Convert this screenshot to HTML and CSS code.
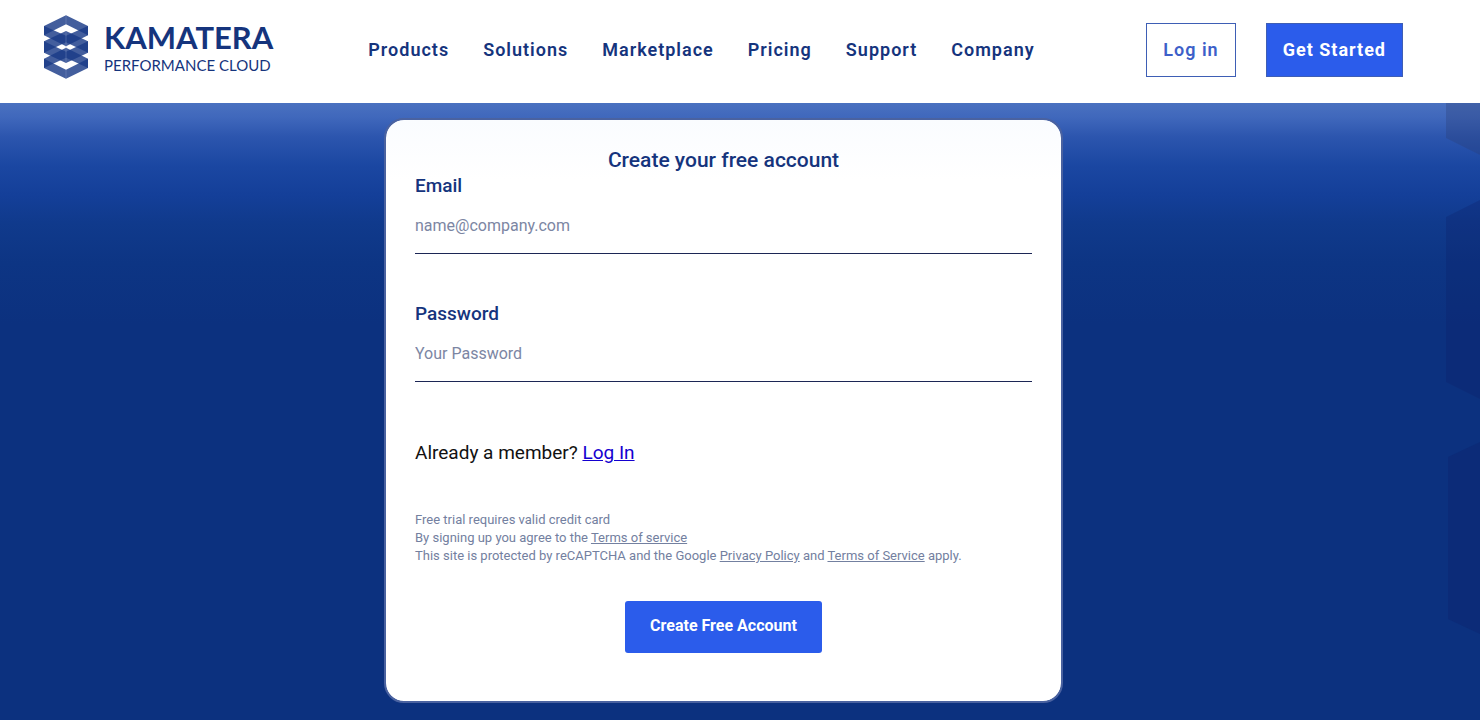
FILE: index.html
```html
<!DOCTYPE html>
<html lang="en">
<head>
    <meta charset="UTF-8">
    <meta name="viewport" content="width=device-width, initial-scale=1.0">
    <title>Kamatera - Create your free account</title>
    <link rel="stylesheet" href="styles.css">
</head>
<body>
    <header class="header">
        <a class="logo" href="#">
            <svg class="logo-mark" viewBox="24 25 130 188" aria-hidden="true">
                <!-- three stacked rings, each one an upper and a lower chevron -->
                <g class="ring">
                    <path d="M24 57 89 25 154 57V84L89 52 24 84Z"/>
                    <path d="M24 57 89 86 154 57V84L89 117 24 84Z"/>
                </g>
                <g class="ring">
                    <path d="M24 102 89 72 154 102V136L89 105 24 136Z"/>
                    <path d="M24 102 89 133 154 102V136L89 166 24 136Z"/>
                </g>
                <g class="ring">
                    <path d="M24 154 89 121 154 154V181L89 151 24 181Z"/>
                    <path d="M24 154 89 186 154 154V181L89 213 24 181Z"/>
                </g>
                <path class="seam" d="M89 25V51M89 74V164M89 187V213"/>
            </svg>
            <span class="logo-text">
                <span class="logo-name">KAMATERA</span>
                <span class="logo-tagline">PERFORMANCE CLOUD</span>
            </span>
        </a>

        <nav class="nav">
            <a href="#">Products</a>
            <a href="#">Solutions</a>
            <a href="#">Marketplace</a>
            <a href="#">Pricing</a>
            <a href="#">Support</a>
            <a href="#">Company</a>
        </nav>

        <div class="header-buttons">
            <a class="btn-login" href="#">Log in</a>
            <a class="btn-start" href="#">Get Started</a>
        </div>
    </header>

    <main class="hero">
        <!-- Hexagons along the right edge -->
        <svg class="hexagons" viewBox="0 0 34 540" aria-hidden="true">
            <path class="faded" d="M0 0H34V52L0 35Z"/>
            <path d="M0 114 34 97V296L0 279Z"/>
            <path d="M2 354 34 339V531L2 516Z"/>
        </svg>

        <form class="card">
            <h1 class="card-title">Create your free account</h1>

            <div class="field">
                <label for="email">Email</label>
                <input type="email" id="email" placeholder="name@company.com">
            </div>

            <div class="field">
                <label for="password">Password</label>
                <input type="password" id="password" placeholder="Your Password">
            </div>

            <p class="member">Already a member? <a href="#">Log In</a></p>

            <p class="terms">
                Free trial requires valid credit card<br>
                By signing up you agree to the <a href="#">Terms of service</a><br>
                This site is protected by reCAPTCHA and the Google <a href="#">Privacy Policy</a> and <a href="#">Terms of Service</a> apply.
            </p>

            <button class="btn-create" type="submit">Create Free Account</button>
        </form>
    </main>
</body>
</html>
```
FILE: styles.css
```css
* {
    box-sizing: border-box;
}

body {
    margin: 0;
    min-height: 100vh;
    display: flex;
    flex-direction: column;
    font-family: Roboto, Arial, sans-serif;
    background-color: #fff;
}

/* Header */
.header {
    display: flex;
    align-items: center;
    padding: 15px 77px 18px 44px;
    min-height: 103px;
}

.logo {
    display: flex;
    align-items: center;
    align-self: flex-start;
    gap: 16px;
    color: #15347d;
    text-decoration: none;
}

.logo-mark {
    width: 44px;
    height: 64px;
}

.ring path {
    fill: #1a3a88;
    fill-opacity: 0.82;
}

.seam {
    stroke: #8fa2d0;
    stroke-width: 1;
    fill: none;
}

.logo-text {
    display: flex;
    flex-direction: column;
    font-family: Lato, sans-serif;
}

.logo-name {
    font-size: 31px;
    line-height: 36px;
    font-weight: 700;
}

.logo-tagline {
    font-size: 15px;
    line-height: 20px;
}

.nav {
    display: flex;
    gap: 34px;
    margin-left: 95px;
}

.nav a {
    color: #15347d;
    font-size: 18px;
    line-height: 24px;
    font-weight: 600;
    letter-spacing: 1px;
    text-decoration: none;
}

.header-buttons {
    display: flex;
    gap: 30px;
    margin-left: auto;
}

.btn-login,
.btn-start {
    padding: 0 16px;
    border: 1px solid #3e5eb5;
    font-size: 18px;
    line-height: 52px;
    text-decoration: none;
}

.btn-login {
    color: #3d5fc9;
    font-weight: 600;
    letter-spacing: 1px;
}

.btn-start {
    color: #fff;
    background-color: #2b5ceb;
    font-weight: 700;
    letter-spacing: 1px;
}

/* Blue area with the sign up card */
.hero {
    position: relative;
    flex: 1;
    display: flex;
    justify-content: center;
    align-items: flex-start;
    padding: 15px 33px 17px 0;
    background: #0c317f linear-gradient(#4a71c0 0, #4068bc 14px, #2c55ae 34px, #1b47a2 62px, #143f99 92px, #103a8c 120px, #0d3584 160px, #0c317f 220px) no-repeat;
}

.hexagons {
    position: absolute;
    top: 0;
    right: 0;
    width: 34px;
    height: 540px;
}

.hexagons path {
    fill: #0a1c64;
    fill-opacity: 0.25;
}

.hexagons .faded {
    fill: #2c3c70;
    fill-opacity: 0.3;
}

.card {
    width: 679px;
    max-width: 100%;
    padding: 27px 29px 48px;
    border: 2px solid #4a62a0;
    border-radius: 20px;
    background: #fff linear-gradient(#fafcff, #fff 60px) no-repeat;
    background-clip: padding-box;
}

.card-title {
    margin: 0;
    color: #15347d;
    font-size: 21px;
    line-height: 26px;
    font-weight: 500;
    text-align: center;
}

.field {
    margin-bottom: 47px;
}

.field label {
    display: block;
    color: #15347d;
    font-size: 19px;
    line-height: 26px;
    font-weight: 500;
}

.field input {
    display: block;
    width: 100%;
    height: 55px;
    padding: 0 0 2px;
    border: none;
    border-bottom: 1px solid #1c2655;
    outline: none;
    background: transparent;
    font-family: inherit;
    font-size: 16px;
}

.field input::placeholder {
    color: #7c86a3;
    opacity: 1;
}

.member {
    margin: 59px 0 46px;
    font-size: 19px;
    line-height: 24px;
    color: #111;
}

.member a {
    color: #1400d0;
}

.terms {
    margin: 0 0 36px;
    color: #7380a0;
    font-size: 13px;
    line-height: 18px;
}

.terms a {
    color: inherit;
}

.btn-create {
    display: block;
    margin: 0 auto;
    padding: 0 25px 3px;
    height: 52px;
    border: none;
    border-radius: 3px;
    color: #fff;
    background-color: #2b5ceb;
    font-family: inherit;
    font-size: 16px;
    font-weight: 700;
    cursor: pointer;
}
```
